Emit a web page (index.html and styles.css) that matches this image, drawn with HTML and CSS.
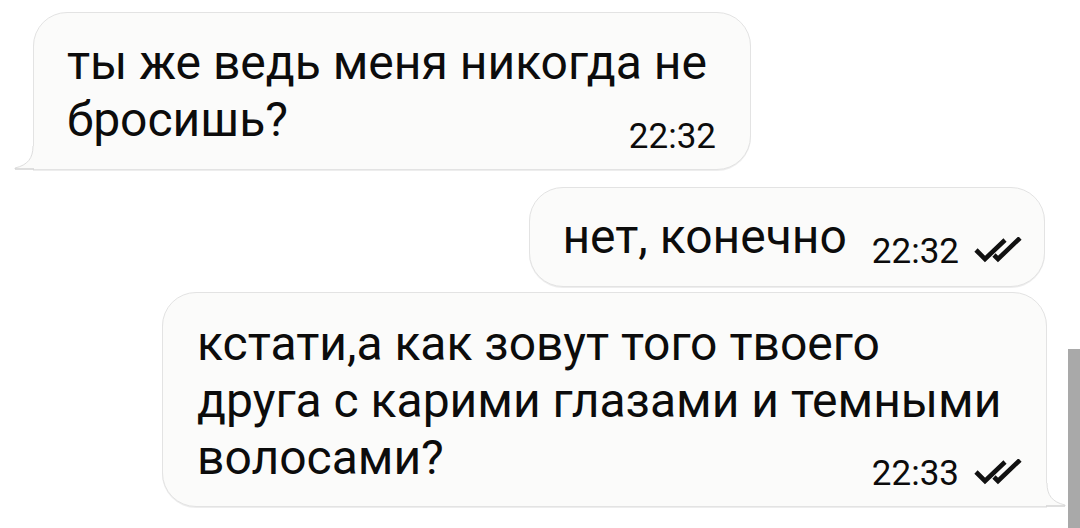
FILE: index.html
```html
<!DOCTYPE html>
<html lang="ru">
<head>
    <meta charset="UTF-8">
    <meta name="viewport" content="width=device-width, initial-scale=1.0">
    <title>Чат</title>
    <link rel="stylesheet" href="styles.css">
</head>
<body>
    <div class="chat">
        <div class="msg in first">
            <div class="text">ты же ведь меня никогда не<br>бросишь?</div>
            <div class="meta"><span class="time">22:32</span></div>
            <svg class="tail tail-left" width="20" height="24" viewBox="0 0 20 24">
                <path d="M19 0 C19 12 14 19 1 22 L1 23 L20 23 L20 0 Z" fill="#fbfbfa"/>
                <path d="M19 0 C19 12 14 19 1 22 L1 23" fill="none" stroke="#dedede" stroke-width="1"/>
                <path d="M1 23 L20 23" stroke="#d2d2d2" stroke-width="1.4"/>
            </svg>
        </div>

        <div class="msg out short">
            <div class="text">нет, конечно</div>
            <div class="meta">
                <span class="time">22:32</span>
                <svg class="checks" width="50" height="26" viewBox="0 0 50 26">
                    <path d="M2 13 L11 22 L31 3" fill="none" stroke="#111" stroke-width="4.6"/>
                    <path d="M20 18 L24 22 L46 1" fill="none" stroke="#111" stroke-width="4.6"/>
                </svg>
            </div>
        </div>

        <div class="msg out last">
            <div class="text">кстати,а как зовут того твоего<br>друга с карими глазами и темными<br>волосами?</div>
            <div class="meta">
                <span class="time">22:33</span>
                <svg class="checks" width="50" height="26" viewBox="0 0 50 26">
                    <path d="M2 13 L11 22 L31 3" fill="none" stroke="#111" stroke-width="4.6"/>
                    <path d="M20 18 L24 22 L46 1" fill="none" stroke="#111" stroke-width="4.6"/>
                </svg>
            </div>
            <svg class="tail tail-right" width="20" height="24" viewBox="0 0 20 24">
                <path d="M1 0 C1 12 6 19 19 22 L19 23 L0 23 L0 0 Z" fill="#fbfbfa"/>
                <path d="M1 0 C1 12 6 19 19 22 L19 23" fill="none" stroke="#dedede" stroke-width="1"/>
                <path d="M0 23 L19 23" stroke="#d2d2d2" stroke-width="1.4"/>
            </svg>
        </div>
    </div>

    <div class="scrollbar"></div>
</body>
</html>
```

FILE: styles.css
```css
html, body {
    margin: 0;
    padding: 0;
    height: 100%;
    overflow: hidden;
    background: #ffffff;
}
body {
    font-family: Roboto, "Noto Sans", sans-serif;
    color: #0c0c0c;
    position: relative;
}
.chat {
    display: flex;
    flex-direction: column;
    padding-top: 12px;
}
.msg {
    position: relative;
    box-sizing: border-box;
    background: #fbfbfa;
    border: 1px solid #e3e3e3;
    border-radius: 34px;
    box-shadow: 0 1px 0 rgba(0, 0, 0, 0.07);
}
.text {
    font-size: 48px;
    line-height: 57px;
}
.meta {
    display: flex;
    justify-content: flex-end;
    align-items: center;
    font-size: 35px;
    line-height: 34px;
}
.time {
    display: block;
}
.checks {
    display: block;
    margin-left: 15px;
    margin-top: -4px;
}

/* incoming */
.first {
    align-self: flex-start;
    margin-left: 33px;
    width: 718px;
    padding: 21px 34px 15px 33px;
    border-bottom-left-radius: 0;
}
.first .meta {
    margin-top: -28px;
}

/* outgoing, one line */
.short {
    align-self: flex-end;
    margin-top: 17px;
    margin-right: 35px;
    display: flex;
    align-items: flex-end;
    padding: 20px 20px 21px 32px;
}
.short .meta {
    margin-left: 25px;
    margin-bottom: -4px;
}

/* outgoing, several lines */
.last {
    align-self: flex-end;
    margin-top: 5px;
    margin-right: 33px;
    width: 885px;
    padding: 22px 22px 15px 34px;
    border-bottom-right-radius: 0;
}
.last .meta {
    margin-top: -29px;
}

.tail {
    position: absolute;
    bottom: -1px;
}
.tail-left {
    left: -20px;
}
.tail-right {
    right: -20px;
}

.scrollbar {
    position: absolute;
    right: 0;
    top: 349px;
    width: 12px;
    height: 179px;
    background: #a9a9a9;
}
```
